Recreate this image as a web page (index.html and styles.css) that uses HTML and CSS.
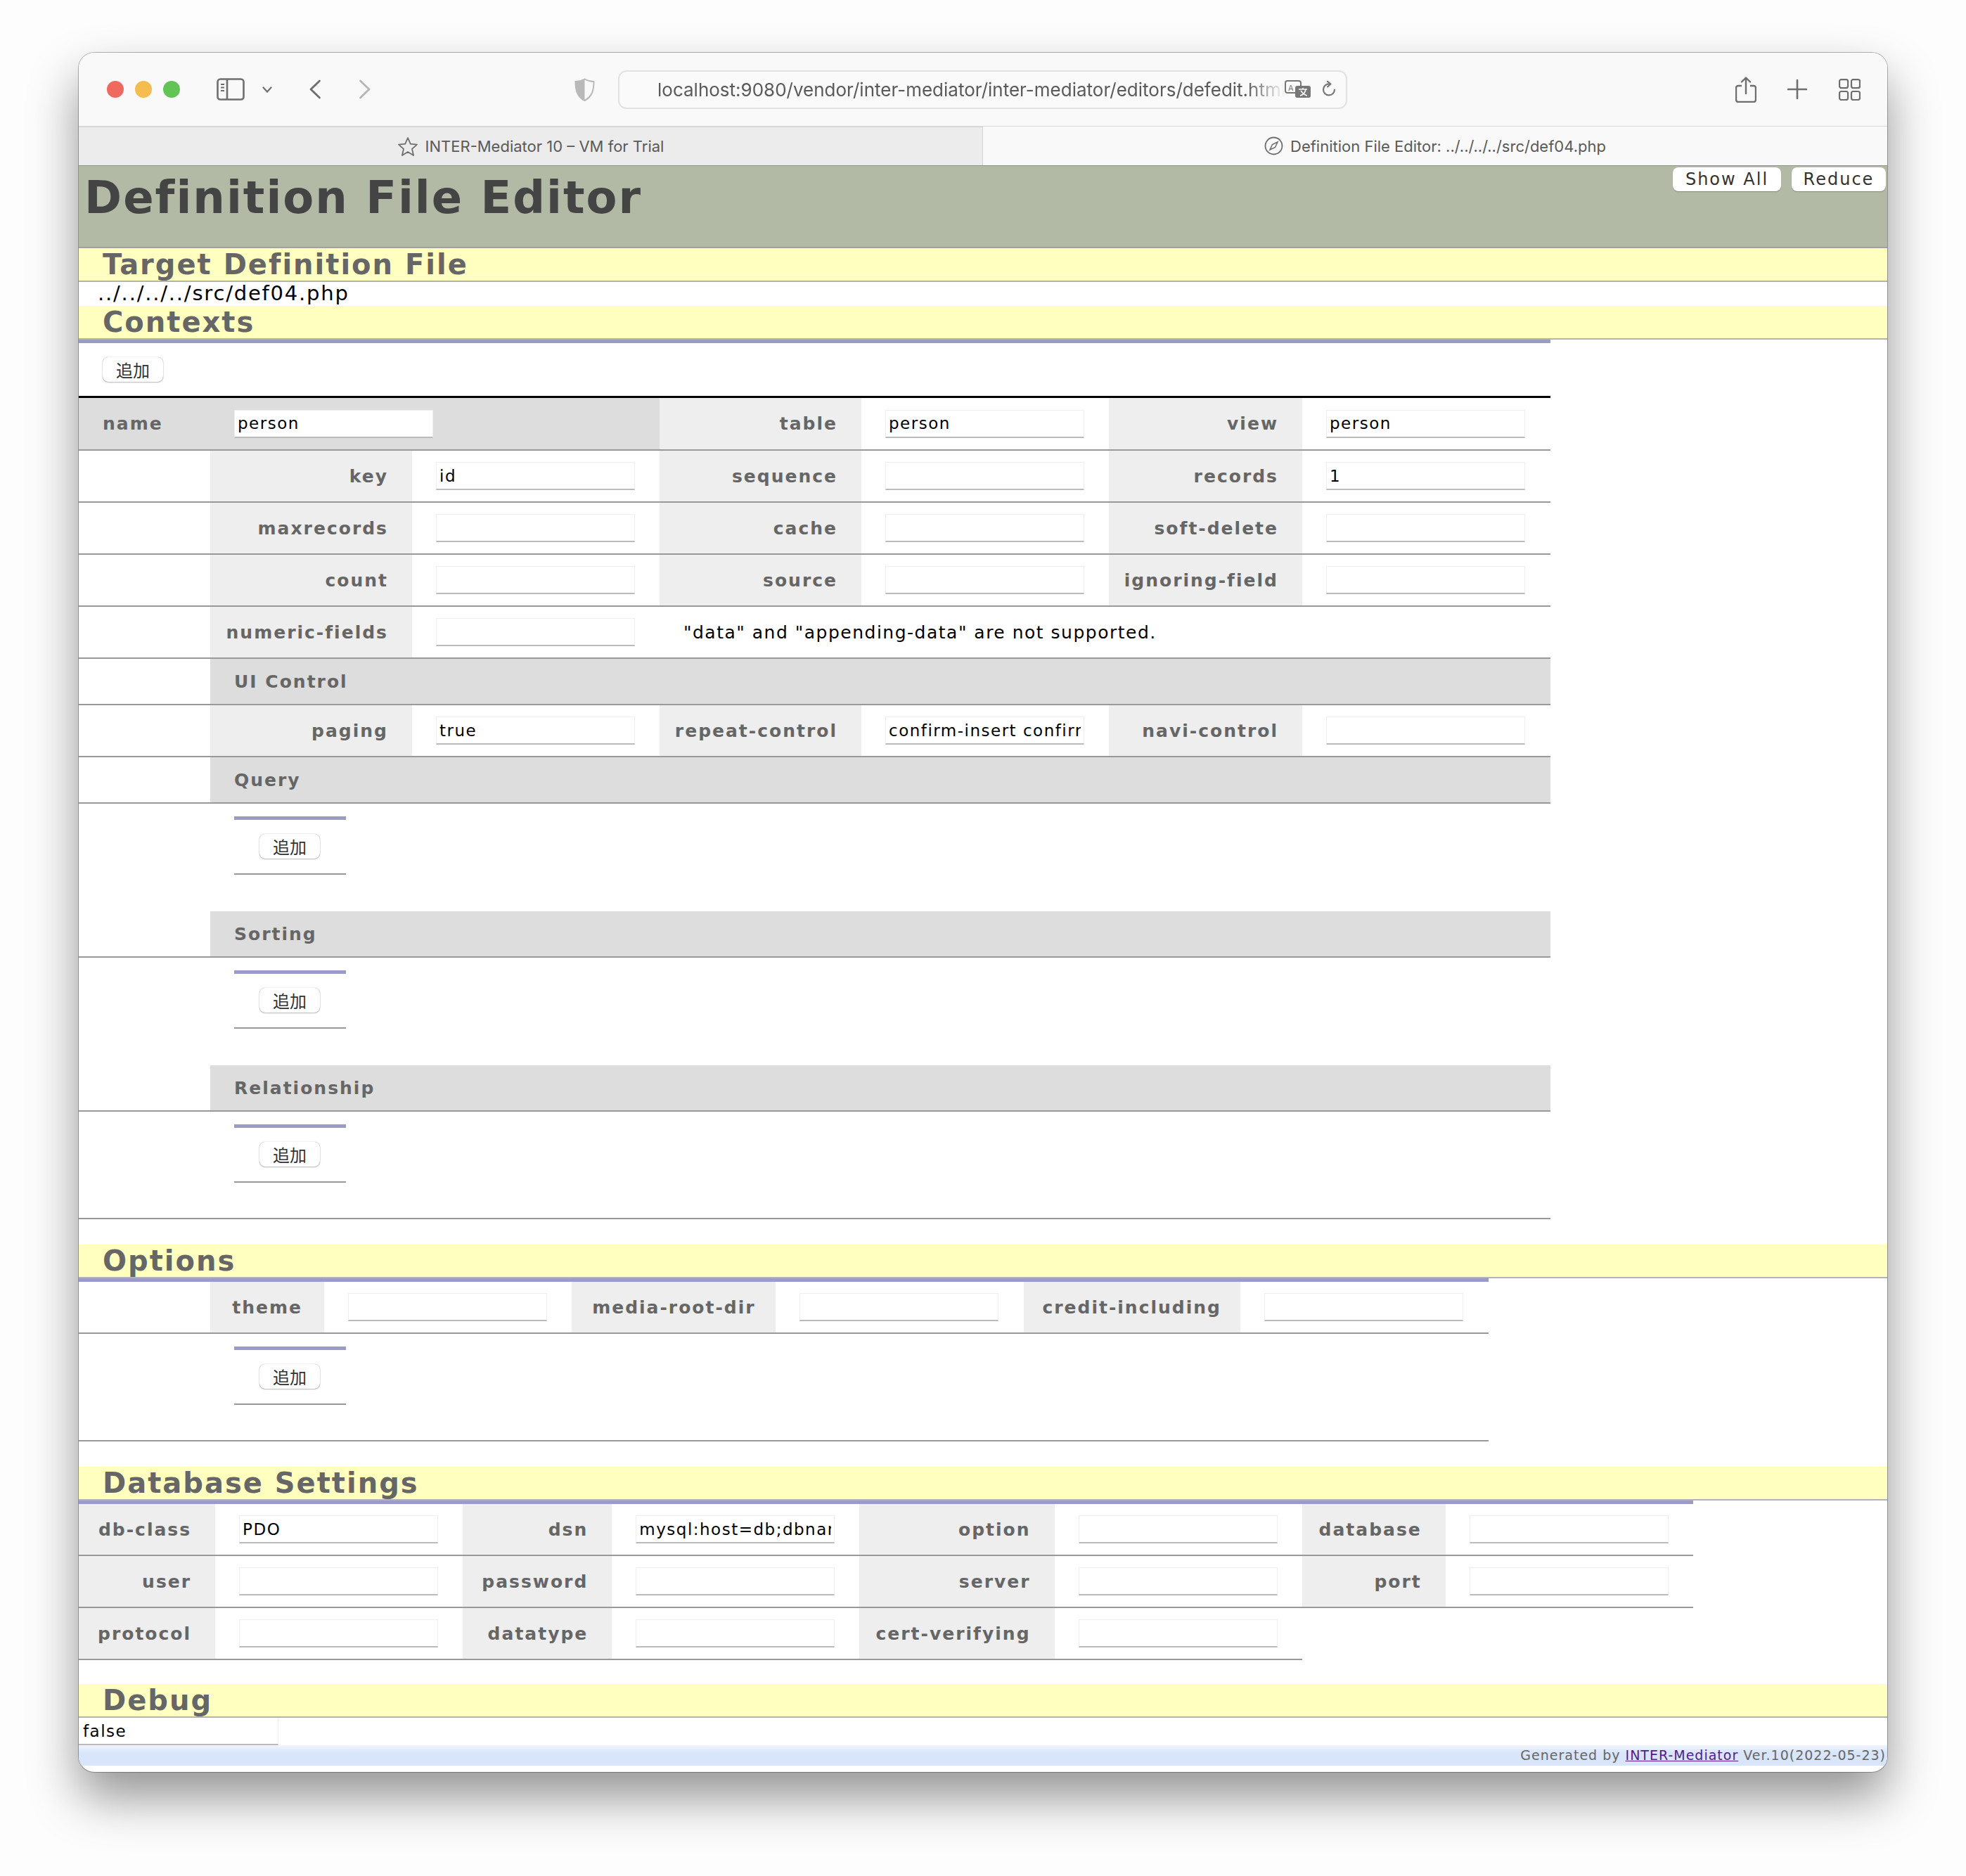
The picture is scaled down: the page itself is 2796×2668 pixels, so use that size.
FILE: index.html
```html
<!DOCTYPE html>
<html lang="en">
<head>
<meta charset="utf-8">
<title>Definition File Editor</title>
<link rel="stylesheet" href="styles.css">
</head>
<body>
<div class="window">
  <div class="toolbar">
    <span class="light red"></span><span class="light yellow"></span><span class="light green"></span>
    <svg class="ic sidebar" width="40" height="32" viewBox="0 0 40 32"><rect x="1.5" y="1.5" width="37" height="29" rx="4" fill="none" stroke="#6e6e6e" stroke-width="2.6"/><path d="M15 2v28" stroke="#6e6e6e" stroke-width="2.6"/><path d="M6 9h5M6 13.500h5M6 18h5" stroke="#6e6e6e" stroke-width="2"/></svg>
    <svg class="ic chev" width="14" height="9" viewBox="0 0 14 9"><path d="M1.500 1.500 7 7.500l5.500-6" fill="none" stroke="#6e6e6e" stroke-width="2.200" stroke-linecap="round"/></svg>
    <svg class="ic back" width="18" height="28" viewBox="0 0 18 28"><path d="M15.500 2 3 14l12.500 12" fill="none" stroke="#6e6e6e" stroke-width="2.800" stroke-linecap="round" stroke-linejoin="round"/></svg>
    <svg class="ic fwd" width="18" height="28" viewBox="0 0 18 28"><path d="M2.500 2 15 14 2.500 26" fill="none" stroke="#b5b5b5" stroke-width="2.800" stroke-linecap="round" stroke-linejoin="round"/></svg>
    <svg class="ic shield" width="29" height="33" viewBox="0 0 29 33"><path d="M14.500 1.500C10 4 6 5 1.500 5c0 12 2 21 13 27 11-6 13-15 13-27-4.500 0-8.500-1-13-3.500Z" fill="#f9f9f9" stroke="#b9b9b9" stroke-width="2"/><path d="M14.500 1.500C10 4 6 5 1.500 5c0 12 2 21 13 27Z" fill="#b9b9b9"/></svg>
    <div class="url">
      <span class="url-text">localhost:9080/vendor/inter-mediator/inter-mediator/editors/defedit.html</span>
      <svg class="ic" width="38" height="26" viewBox="0 0 38 26"><rect x="1" y="1" width="22" height="17" rx="3" fill="none" stroke="#777" stroke-width="2"/><text x="5" y="15" class="tr-a">A</text><rect x="15" y="8" width="22" height="17" rx="3" fill="#777"/><path d="M20 13h12M26 11v2M22 22c4-1 7-4 8-9M23 15c2 3 5 6 9 7" fill="none" stroke="#f9f9f9" stroke-width="1.600"/></svg>
      <svg class="ic reload" width="20" height="24" viewBox="0 0 20 24"><path d="M11 4.500A8 8 0 1 0 18 12.500" fill="none" stroke="#777" stroke-width="2.200" stroke-linecap="round"/><path d="M8 .8 12.500 4.500 8 8.500" fill="none" stroke="#777" stroke-width="2.200" stroke-linecap="round" stroke-linejoin="round"/></svg>
    </div>
    <svg class="ic share" width="30" height="37" viewBox="0 0 30 37"><path d="M9 13H4a3 3 0 0 0-3 3v17a3 3 0 0 0 3 3h22a3 3 0 0 0 3-3V16a3 3 0 0 0-3-3h-5" fill="none" stroke="#6e6e6e" stroke-width="2.400"/><path d="M15 24V2M9 7.500 15 1.500l6 6" fill="none" stroke="#6e6e6e" stroke-width="2.400" stroke-linecap="round" stroke-linejoin="round"/></svg>
    <svg class="ic plus" width="28" height="28" viewBox="0 0 28 28"><path d="M14 1v26M1 14h26" stroke="#6e6e6e" stroke-width="2.600" stroke-linecap="round"/></svg>
    <svg class="ic grid" width="31" height="31" viewBox="0 0 31 31"><g fill="none" stroke="#6e6e6e" stroke-width="2.200"><rect x="1.100" y="1.100" width="12" height="12" rx="2.500"/><rect x="18" y="1.100" width="12" height="12" rx="2.500"/><rect x="1.100" y="18" width="12" height="12" rx="2.500"/><rect x="18" y="18" width="12" height="12" rx="2.500"/></g></svg>
  </div>
  <div class="tabs">
    <div class="tab tab-off">
      <svg class="ic" width="30" height="29" viewBox="0 0 30 29"><path d="m15 2 3.800 8.700 9.200.9-7 6.200 2.100 9.200-8.100-4.900L6.900 27 9 17.800l-7-6.200 9.200-.9Z" fill="none" stroke="#6e6e6e" stroke-width="1.800" stroke-linejoin="round"/></svg>
      <span>INTER-Mediator 10 – VM for Trial</span>
    </div>
    <div class="tab tab-on">
      <svg class="ic" width="27" height="27" viewBox="0 0 27 27"><circle cx="13.500" cy="13.500" r="12" fill="none" stroke="#6e6e6e" stroke-width="1.800"/><path d="m19 8-3.500 7.500L8 19l3.500-7.500Z" fill="none" stroke="#6e6e6e" stroke-width="1.600"/></svg>
      <span>Definition File Editor: ../../../../src/def04.php</span>
    </div>
  </div>
  <header class="head">
    <h1>Definition File Editor</h1>
    <div class="head-btns"><button class="hbtn">Show All</button><button class="hbtn">Reduce</button></div>
  </header>
  <h2 class="sec sec-first">Target Definition File</h2>
  <div class="path">../../../../src/def04.php</div>
  <h2 class="sec">Contexts</h2>
  <table class="tbl ctx">
    <colgroup><col class="c0"><col class="c1"><col class="c2"><col class="c3"><col class="c4"><col class="c5"><col class="c6"></colgroup>
    <tr><td colspan="7" class="addcell"><button class="add">追加</button></td></tr>
    <tr class="name-row">
      <th class="dk lft">name</th><td colspan="2" class="dk namecell"><input class="f" value="person"></td>
      <th>table</th><td><input class="f" value="person"></td><th>view</th><td><input class="f" value="person"></td>
    </tr>
    <tr><td></td><th>key</th><td><input class="f" value="id"></td><th>sequence</th><td><input class="f"></td><th>records</th><td><input class="f" value="1"></td></tr>
    <tr><td></td><th>maxrecords</th><td><input class="f"></td><th>cache</th><td><input class="f"></td><th>soft-delete</th><td><input class="f"></td></tr>
    <tr><td></td><th>count</th><td><input class="f"></td><th>source</th><td><input class="f"></td><th>ignoring-field</th><td><input class="f"></td></tr>
    <tr><td></td><th>numeric-fields</th><td><input class="f"></td><td colspan="4" class="note">"data" and "appending-data" are not supported.</td></tr>
    <tr class="group"><td></td><th colspan="6">UI Control</th></tr>
    <tr><td></td><th>paging</th><td><input class="f" value="true"></td><th>repeat-control</th><td><input class="f" value="confirm-insert confirm-update"></td><th>navi-control</th><td><input class="f"></td></tr>
    <tr class="group"><td></td><th colspan="6">Query</th></tr>
    <tr class="sub"><td></td><td colspan="6"><div class="mini"><button class="add">追加</button></div></td></tr>
    <tr class="group"><td></td><th colspan="6">Sorting</th></tr>
    <tr class="sub"><td></td><td colspan="6"><div class="mini"><button class="add">追加</button></div></td></tr>
    <tr class="group"><td></td><th colspan="6">Relationship</th></tr>
    <tr class="sub"><td></td><td colspan="6"><div class="mini"><button class="add">追加</button></div></td></tr>
  </table>
  <h2 class="sec sec-gap">Options</h2>
  <table class="tbl opts">
    <colgroup><col class="c0"><col class="o1"><col class="c2"><col class="o3"><col class="c4"><col class="o5"><col class="c6"></colgroup>
    <tr class="opt-row"><td></td><th class="ctr">theme</th><td><input class="f"></td><th class="ctr">media-root-dir</th><td><input class="f"></td><th class="ctr">credit-including</th><td><input class="f"></td></tr>
    <tr class="sub"><td></td><td colspan="6"><div class="mini"><button class="add">追加</button></div></td></tr>
  </table>
  <h2 class="sec sec-gap">Database Settings</h2>
  <table class="tbl db">
    <colgroup><col class="d1"><col class="c2"><col class="d3"><col class="c2"><col class="d5"><col class="c2"><col class="d7"><col class="c2"></colgroup>
    <tr><th>db-class</th><td><input class="f" value="PDO"></td><th>dsn</th><td><input class="f" value="mysql:host=db;dbname=test;charset=utf8mb4"></td><th>option</th><td><input class="f"></td><th>database</th><td><input class="f"></td></tr>
    <tr><th>user</th><td><input class="f"></td><th>password</th><td><input class="f"></td><th>server</th><td><input class="f"></td><th>port</th><td><input class="f"></td></tr>
    <tr><th>protocol</th><td><input class="f"></td><th>datatype</th><td><input class="f"></td><th>cert-verifying</th><td><input class="f"></td><td class="none" colspan="2"></td></tr>
  </table>
  <h2 class="sec sec-debug">Debug</h2>
  <input class="f debug" value="false">
  <footer class="foot">Generated by <a href="#">INTER-Mediator</a> Ver.10(2022-05-23)</footer>
</div>
</body>
</html>
```

FILE: styles.css
```css
* { box-sizing: border-box; }
html, body { margin: 0; padding: 0; }
body {
  width: 2796px;
  height: 2668px;
  padding: 75px 112px 0;
  background: #fdfdfd;
  font-family: "DejaVu Sans", Verdana, sans-serif;
  overflow: hidden;
}
.window {
  width: 2572px;
  height: 2445px;
  background: #fff;
  border-radius: 22px;
  overflow: hidden;
  box-shadow: 0 0 0 1px rgba(0,0,0,.28), 0 36px 70px rgba(0,0,0,.42);
}
.ic { flex: none; display: block; }

/* browser chrome */
.toolbar {
  height: 105px;
  background: #f9f9f9;
  border-bottom: 1px solid #dcdcdc;
  display: flex;
  align-items: center;
  padding-left: 40px;
}
.light { width: 24px; height: 24px; border-radius: 50%; margin-right: 16px; flex: none; }
.red { background: #ee6a5e; }
.yellow { background: #f5bd4f; }
.green { background: #61c454; }
.sidebar { margin-left: 36px; }
.chev { margin-left: 25px; }
.back { margin-left: 52px; }
.fwd { margin-left: 53px; }
.shield { margin-left: 289px; }
.url {
  margin-left: 33px;
  width: 1037px;
  height: 55px;
  border: 2px solid #e2e2e2;
  border-radius: 12px;
  background: #fafafa;
  display: flex;
  align-items: center;
  padding-left: 54px;
  position: relative;
}
.url-text {
  width: 892px;
  flex: none;
  overflow: hidden;
  white-space: nowrap;
  font: 26px Inter, "Liberation Sans", sans-serif;
  color: #5a5a5a;
  -webkit-mask-image: linear-gradient(90deg, #000 94%, transparent);
  mask-image: linear-gradient(90deg, #000 94%, transparent);
}
.tr-a { font: 11px Inter, sans-serif; fill: #777; }
.reload { margin-left: 15px; }
.share { margin-left: 552px; }
.plus { margin-left: 44px; }
.grid { margin-left: 45px; }
.tabs { display: flex; height: 55px; font: 22px Inter, "Liberation Sans", sans-serif; color: #5a5a5a; }
.tab { display: flex; align-items: center; justify-content: center; gap: 10px; }
.tab-off { width: 1286px; background: #ececec; border-right: 1px solid #d4d4d4; border-top: 1px solid #d4d4d4; }
.tab-on { flex: 1; background: #f9f9f9; }

/* page header */
.head {
  height: 118px;
  background: #b2baa5;
  border-top: 1px solid #8f9883;
  border-bottom: 2px solid #a0a39c;
  display: flex;
  justify-content: space-between;
  align-items: flex-start;
  padding: 2px 2px 0 8px;
}
h1 {
  margin: 0;
  font-size: 64px;
  line-height: 86px;
  font-weight: bold;
  color: #444;
  letter-spacing: 2px;
}
.head-btns { display: flex; gap: 15px; }
.hbtn, .add {
  font-family: inherit;
  background: #fff;
  border: 0;
  border-radius: 8px;
  padding: 0;
  color: #333;
}
.hbtn { height: 34px; font-size: 24px; letter-spacing: 2px; box-shadow: 0 1px 1px rgba(0,0,0,.25); }
.hbtn:nth-child(1) { width: 154px; }
.hbtn:nth-child(2) { width: 134px; }

.sec {
  margin: 0;
  height: 48px;
  padding: 0 0 0 34px;
  background: #ffffc0;
  border-bottom: 2px solid #b3b3b3;
  font-size: 40px;
  line-height: 46px;
  font-weight: bold;
  color: #666;
  letter-spacing: 2px;
}
.sec-gap { margin-top: 36px; }
.sec-debug { margin-top: 34px; }
.path { height: 34px; padding-left: 27px; font-size: 29px; line-height: 33px; letter-spacing: 1.800px; color: #000; }

/* tables */
.tbl {
  border-collapse: separate;
  border-spacing: 0;
  table-layout: fixed;
  border-top: 5px solid #9b9bc8;
  font-size: 24px;
}
.tbl td, .tbl th {
  height: 74px;
  padding: 0;
  border-bottom: 2px solid #999;
  vertical-align: middle;
}
.tbl th {
  background: #eee;
  color: #666;
  font-size: 25px;
  font-weight: bold;
  letter-spacing: 2px;
  text-align: right;
  padding-right: 34px;
  white-space: nowrap;
}
.tbl td { padding-left: 34px; }
.tbl td:empty { padding: 0; }
.ctx { width: 2093px; }
.c0 { width: 187px; }
.c1 { width: 287px; }
.c2 { width: 352px; }
.c3 { width: 287px; }
.c4 { width: 352px; }
.c5 { width: 275px; }
.c6 { width: 353px; }
.addcell.addcell { height: 78px; border-bottom: 3px solid #000; }
.add { display: block; width: 86px; height: 35px; font-size: 24px; box-shadow: 0 0 1px rgba(0,0,0,.45), 0 1px 2px rgba(0,0,0,.25); font-family: "Noto Sans CJK JP", sans-serif; }
.name-row .dk { background: #ddd; }
.name-row .lft { text-align: left; padding: 0 0 0 34px; }
.name-row .namecell { padding-left: 34px; }
.name-row td, .name-row th { height: 75px; }
.note { font-size: 25px; letter-spacing: 1.500px; color: #000; }
.tbl .group th { height: 66px; background: #ddd; text-align: left; padding: 0 0 0 34px; }
.tbl .group td { height: 66px; }
.tbl .sub td { height: 153px; border-bottom: 0; vertical-align: top; padding-top: 18px; }
.tbl .sub td:empty { padding: 0; }
.ctx tr:nth-last-child(1) td { height: 153px; border-bottom: 2px solid #999; }
.ctx tr:nth-last-child(3) td { height: 153px; padding-top: 18px; }
.mini {
  width: 159px;
  height: 83px;
  border-top: 5px solid #9b9bc8;
  border-bottom: 2px solid #999;
  padding: 20px 0 0 36px;
}
.f {
  display: block;
  width: 283px;
  height: 40px;
  margin: 0;
  padding: 0 4px;
  background: #fff;
  border: 1px solid #eee;
  border-bottom: 2px solid #bbb;
  border-radius: 0;
  outline: 0;
  font-family: inherit;
  font-size: 23px;
  letter-spacing: 1.500px;
  color: #000;
}
.opts { width: 2005px; }
.o1 { width: 162px; }
.o3 { width: 290px; }
.o5 { width: 308px; }
.tbl .ctr { text-align: center; padding: 0; }
.opt-row td, .opt-row th { height: 74px; }
.opts .sub td { border-bottom: 2px solid #999; height: 153px; }
.db { width: 2296px; }
.d1 { width: 194px; }
.d3 { width: 212px; }
.d5 { width: 277px; }
.d7 { width: 204px; }
.tbl .none { border-bottom: 0; padding: 0; }
.debug { width: 284px; height: 39px; border-top: 0; border-left: 0; padding: 0 6px; }
.foot {
  height: 29px;
  background: linear-gradient(#f1f4fd, #d9e5fb 35%);
  text-align: right;
  padding-right: 2px;
  font-size: 19px;
  line-height: 29px;
  letter-spacing: 1px;
  color: #666;
}
.foot a { color: #551a8b; }
```
